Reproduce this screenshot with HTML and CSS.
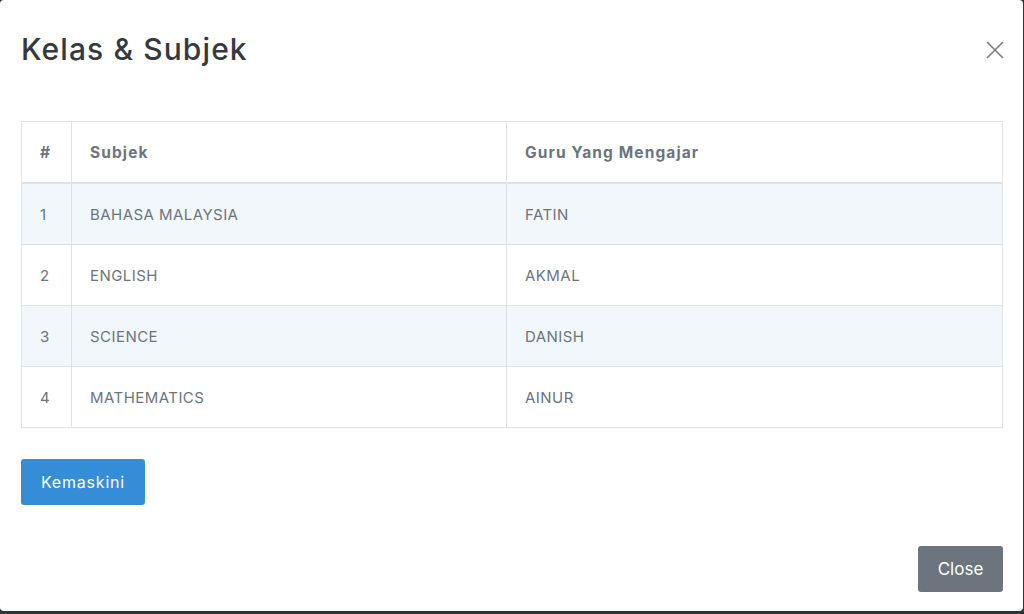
FILE: index.html
```html
<!DOCTYPE html>
<html>
<head>
<meta charset="utf-8">
<link rel="stylesheet" href="styles.css">
</head>
<body>
<div class="modal">
  <div class="modal-header">
    <h2 class="modal-title">Kelas &amp; Subjek</h2>
    <button class="btn-close" aria-label="Close">
      <svg width="18" height="18" viewBox="0 0 18 18"><path d="M1 1L17 17M17 1L1 17" stroke="#7a7a7a" stroke-width="1.6" fill="none"/></svg>
    </button>
  </div>
  <div class="modal-body">
    <table class="table">
      <thead>
        <tr><th class="c-no">#</th><th class="c-sub">Subjek</th><th>Guru Yang Mengajar</th></tr>
      </thead>
      <tbody>
        <tr class="odd"><td>1</td><td>BAHASA MALAYSIA</td><td>FATIN</td></tr>
        <tr><td>2</td><td>ENGLISH</td><td>AKMAL</td></tr>
        <tr class="odd"><td>3</td><td>SCIENCE</td><td>DANISH</td></tr>
        <tr><td>4</td><td>MATHEMATICS</td><td>AINUR</td></tr>
      </tbody>
    </table>
    <button class="btn btn-primary">Kemaskini</button>
  </div>
  <div class="modal-footer">
    <button class="btn btn-secondary">Close</button>
  </div>
</div>
</body>
</html>
```
FILE: styles.css
```css
html, body { margin: 0; padding: 0; }
body {
  background: #2f3438;
  width: 1024px;
  height: 614px;
  overflow: hidden;
  font-family: "Inter", "Open Sans", sans-serif;
}
.modal {
  width: 1023px;
  height: 611px;
  background: #fff;
  border-radius: 4px;
  display: flex;
  flex-direction: column;
  box-sizing: border-box;
}
.modal-header {
  height: 100px;
  padding: 0 19px 0 21px;
  display: flex;
  align-items: center;
  justify-content: space-between;
}
.modal-title {
  margin: 0;
  font-size: 30px;
  font-weight: 500;
  color: #343a40;
  letter-spacing: 1.1px;
  padding-bottom: 2px;
}
.btn-close {
  background: none;
  border: 0;
  padding: 0;
  width: 18px;
  height: 18px;
  display: flex;
}
.modal-body {
  padding: 21px 20px 0 21px;
  flex: 1;
}
.table {
  width: 982px;
  border-collapse: collapse;
  border: 1px solid #dee2e6;
  color: #6c757d;
  font-size: 15px;
  letter-spacing: 0.45px;
}
.table th, .table td {
  border: 1px solid #dee2e6;
  text-align: left;
  padding: 0 17px 0 18px;
  height: 60px;
}
.table th {
  font-weight: 700;
  font-size: 15.5px;
  letter-spacing: 1.1px;
  height: 60px;
  border-bottom: 2px solid #dee2e6;
}
.c-no { width: 14px; }
.c-sub { width: 399px; }
.table tr.odd td { background: #f2f7fc; }
.btn {
  font-family: "Inter", "Open Sans", sans-serif;
  font-size: 16px;
  border: 0;
  border-radius: 3px;
  color: #fff;
  cursor: pointer;
}
.btn-primary {
  margin-top: 31px;
  width: 124px;
  height: 46px;
  background: #358dd8;
  letter-spacing: 0.8px;
}
.modal-footer {
  display: flex;
  justify-content: flex-end;
  padding: 0 20px 19px 0;
}
.btn-secondary {
  width: 85px;
  height: 46px;
  background: #6c757d;
  font-size: 17px;
}
```
